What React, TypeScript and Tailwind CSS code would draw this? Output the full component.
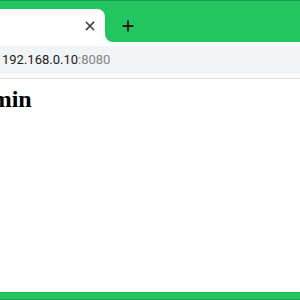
export default function App() {
  return (
    <div className="flex h-[300px] w-[300px] flex-col overflow-hidden bg-white">
      {/* tab strip */}
      <div className="flex flex-col border-t border-[#1a9e4b] bg-[#22c55e] pt-[8px]">
        <div className="flex h-[33px]">
          <div className="flex w-[105px] items-center justify-end rounded-tr-[8px] bg-white pr-[10px]">
            <svg width="10" height="10" viewBox="0 0 10 10" className="text-[#3c4043]">
              <path d="M1.5 1.5 L8.5 8.5 M8.5 1.5 L1.5 8.5" stroke="currentColor" strokeWidth="1.6" strokeLinecap="square" />
            </svg>
          </div>
          <div className="flex-1 bg-white">
            <div className="flex h-full items-center rounded-bl-[8px] bg-[#22c55e] pl-[17px]">
              <svg width="12" height="12" viewBox="0 0 12 12" className="text-[#202124]">
                <path d="M6 0.5 V11.5 M0.5 6 H11.5" stroke="currentColor" strokeWidth="2" />
              </svg>
            </div>
          </div>
        </div>
      </div>

      {/* toolbar */}
      <div className="border-b border-[#dadce0] bg-white py-[4px]">
        <div className="flex h-[28px] items-center bg-[#f1f3f4] pl-[2px] font-['Roboto',sans-serif] text-[13px]">
          <span className="text-[#202124]">192.168.0.10</span>
          <span className="text-[#80868b]">:8080</span>
        </div>
      </div>

      {/* page */}
      <div className="flex-1 overflow-hidden">
        <h2 className="ml-[-39px] mt-[4px] font-['Liberation_Serif',serif] text-[24px] font-bold leading-8 text-black">
          Admin
        </h2>
      </div>

      {/* bottom bar */}
      <div className="h-[8px] border-t border-b border-t-[#20b658] border-b-[#1a9e4b] bg-[#22c55e]" />
    </div>
  );
}
